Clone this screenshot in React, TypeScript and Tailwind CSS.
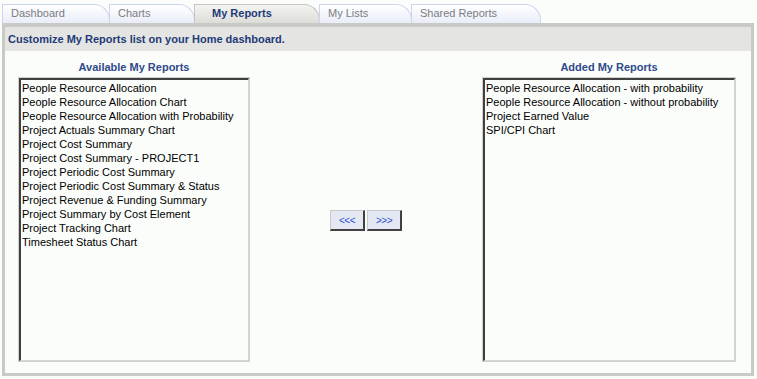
import React from 'react'

const available = [
  'People Resource Allocation',
  'People Resource Allocation Chart',
  'People Resource Allocation with Probability',
  'Project Actuals Summary Chart',
  'Project Cost Summary',
  'Project Cost Summary - PROJECT1',
  'Project Periodic Cost Summary',
  'Project Periodic Cost Summary & Status',
  'Project Revenue & Funding Summary',
  'Project Summary by Cost Element',
  'Project Tracking Chart',
  'Timesheet Status Chart',
]

const added = [
  'People Resource Allocation - with probability',
  'People Resource Allocation - without probability',
  'Project Earned Value',
  'SPI/CPI Chart',
]

const tabs = [
  { label: 'Dashboard', w: 'w-[108px]' },
  { label: 'Charts', w: 'w-[86px]' },
  { label: 'My Reports', w: 'w-[126px]', active: true },
  { label: 'My Lists', w: 'w-[93px]' },
  { label: 'Shared Reports', w: 'w-[130px]' },
]

function ListBox({ items, width }: { items: string[]; width: string }) {
  return (
    <div className={`${width} h-[285px] border border-[#cfd1cd] bg-[#fbfdfa]`}>
      <div className="h-full border-t-2 border-l-2 border-t-[#404040] border-l-[#404040] border-r border-b border-r-[#d6d6d2] border-b-[#d6d6d2] pl-[1px] pt-[1px]">
        {items.map(i => (
          <div key={i} className="h-[14px] leading-[14px] text-[11px] text-black whitespace-nowrap">{i}</div>
        ))}
      </div>
    </div>
  )
}

export default function App() {
  return (
    <div className="w-[757px] h-[379px] bg-[#fbfdfa] font-['Liberation_Sans',Arial,sans-serif] pt-[4px] pl-[2px]">
      {/* tab strip */}
      <div className="flex h-[19px] items-end">
        {tabs.map(t => (
          <div
            key={t.label}
            className={`${t.w} h-[19px] -mr-[1px] rounded-tr-[16px] border-t border-r border-l pl-[8px] text-[11px] leading-[17px] ${
              t.active
                ? 'bg-gradient-to-b from-[#f4f4f2] to-[#dcdcd8] border-[#c4c4c0] text-[#233a78] font-bold pl-[17px]'
                : 'bg-gradient-to-b from-[#ffffff] to-[#e9edf8] border-[#cdd5ee] text-[#7a7c82]'
            }`}
          >
            {t.label}
          </div>
        ))}
      </div>

      {/* panel */}
      <div className="w-[752px] h-[353px] border-[3px] border-[#c8cac6] border-t-[4px]">
        <div className="h-[24px] bg-[#e4e5e2] pl-[3px] text-[11px] font-bold text-[#233a78] leading-[24px]">
          Customize My Reports list on your Home dashboard.
        </div>

        <div className="flex pl-[13px] pr-[15px] pt-[9px]">
          <div className="flex flex-col items-center">
            <div className="text-[11px] font-bold text-[#2f4a8a] leading-[14px] mb-[3px]">Available My Reports</div>
            <ListBox items={available} width="w-[232px]" />
          </div>

          <div className="flex-1 flex justify-center items-start pt-[150px] gap-[2px]">
            <button className="w-[35px] h-[21px] bg-[#e3e8f3] border-t border-l border-[#c8c8c8] border-r-2 border-b-2 border-r-[#404040] border-b-[#404040] text-[10px] text-[#2c4fd0] leading-[17px] tracking-[-0.5px]">
              &lt;&lt;&lt;
            </button>
            <button className="w-[35px] h-[21px] bg-[#e3e8f3] border-t border-l border-[#c8c8c8] border-r-2 border-b-2 border-r-[#404040] border-b-[#404040] text-[10px] text-[#2c4fd0] leading-[17px] tracking-[-0.5px]">
              &gt;&gt;&gt;
            </button>
          </div>

          <div className="flex flex-col items-center">
            <div className="text-[11px] font-bold text-[#2f4a8a] leading-[14px] mb-[3px]">Added My Reports</div>
            <ListBox items={added} width="w-[254px]" />
          </div>
        </div>
      </div>
    </div>
  )
}
